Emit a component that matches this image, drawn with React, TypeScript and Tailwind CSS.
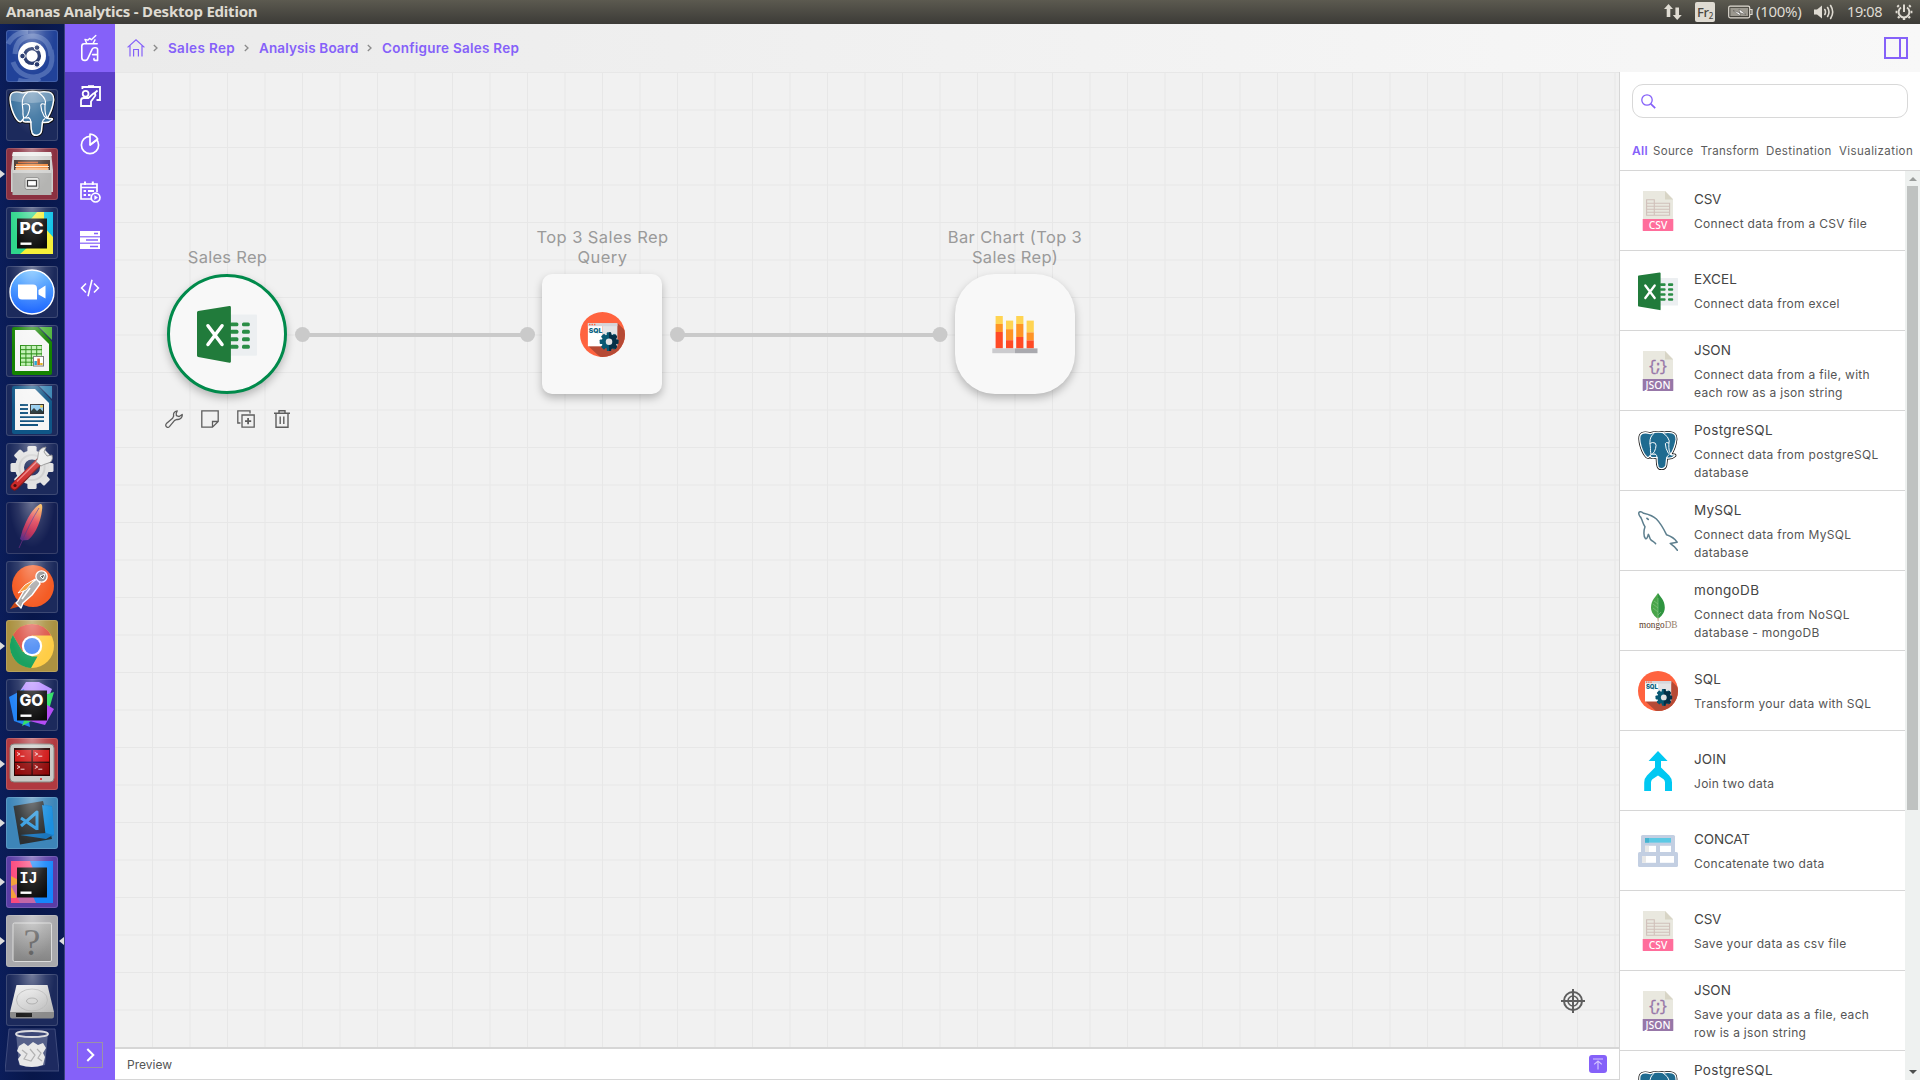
import React from "react";

type IconProps = { className?: string };

/* ---------- shared drawings ---------- */

const elephantOutline =
  "M12.6 2.6Q4.5.4 2.4 4.2Q.8 8 3.2 16Q5.6 23.6 9 26.6Q10.8 28 12.4 25.6Q13.4 28 16.4 27.2L19.6 27.4Q19.4 33 20.6 36.6Q21.6 39 24.8 38.6Q28 38.2 28.6 35L29.4 27.6Q34.4 28.6 37.8 25.4Q38.4 24.2 36.4 24.4Q34.6 24.6 33.6 24Q38 17 39 8.6Q39.2 3.2 35 2Q30.4.8 27 2Q20 .2 12.6 2.6Z";

function Elephant({ size, light = false }: { size: number; light?: boolean }) {
  return (
    <svg viewBox="0 0 41 41" width={size} height={size} fill="none" strokeLinejoin="round" strokeLinecap="round">
      <path d={elephantOutline} stroke="#0a0a0a" strokeWidth="2.8" />
      <path d={elephantOutline} stroke="#fff" strokeWidth="1.3" fill={light ? "#3a729f" : "#1f6b90"} />
      {light && <path d="M12.6 2.6Q4.5.4 2.4 4.2Q1.6 6 2 9Q20 13 38.8 9Q39.2 3.2 35 2Q30.4.8 27 2Q20 .2 12.6 2.6Z" fill="#a3bdd2" opacity=".45" />}
      <g stroke="#fff" strokeWidth="1">
        <path d="M16.6 2.2Q12 5.4 12.2 12L12.8 18Q12.6 20.4 13 22Q14 24.4 12.4 25.6" />
        <path d="M12.4 12.6Q15 11 17.6 12.4Q19.2 14 18 18Q17.2 21.6 15 23.4" />
        <path d="M26 2.2Q31.4 6 32 10Q31.4 13.6 31.6 17Q31.4 20.6 33.6 24" />
        <path d="M31.4 12.2Q28.6 11 28 13Q28.2 18 31 22.6Q32.4 24.4 34.6 24.3" />
        <path d="M19.6 27.4Q19.6 24.6 17.6 23.4M13.4 23.8H17.4M29.4 27.6Q29.6 25.4 31.4 24.6" />
      </g>
    </svg>
  );
}

function ExcelIcon({ className }: IconProps) {
  return (
    <svg viewBox="0 0 40 40" className={className}>
      <rect x="20" y="7" width="20" height="27.5" rx="0.6" fill="#eceff1" />
      <g fill="#2a8d46">
        {[12.3, 17.2, 22.2, 27.2].map((y) => (
          <g key={y}>
            <rect x="22" y={y} width="5.6" height="2.6" rx="1" />
            <rect x="30" y={y} width="5.2" height="2.6" rx="1" />
          </g>
        ))}
      </g>
      <path d="M0 6.2 Q0 5.4 .8 5.2L21.6 2Q22.6 1.9 22.6 2.8V39Q22.6 40 21.6 39.7L.8 36Q0 35.9 0 35Z" fill="#217b3b" transform="translate(0 -.6)" />
      <path d="M7.3 14.5 16.7 27M16.7 14.5 7.3 27" stroke="#fff" strokeWidth="2.3" strokeLinecap="round" />
    </svg>
  );
}

function SqlIcon({ className }: IconProps) {
  return (
    <svg viewBox="0 0 40 40" className={className}>
      <defs>
        <clipPath id="sqlc"><circle cx="20" cy="20" r="20" /></clipPath>
      </defs>
      <circle cx="20" cy="20" r="20" fill="#ff633f" />
      <g clipPath="url(#sqlc)">
        <path d="M33.5 10 L44 20.5V42H20L7 30Z" fill="#b64a35" />
      </g>
      <rect x="7" y="10" width="13" height="20.5" fill="#fff" />
      <rect x="20" y="10" width="13.2" height="20.5" fill="#e4e4e6" />
      <rect x="7" y="10" width="26.2" height="2.6" fill="#d5d6db" />
      <g fill="#ff633f"><rect x="8" y="10.5" width="1.3" height="1.3" /><rect x="10.2" y="10.5" width="1.3" height="1.3" /><rect x="12.4" y="10.5" width="1.3" height="1.3" /></g>
      <text x="7.9" y="18.3" fontFamily="Inter, sans-serif" fontWeight="900" fontSize="5.8" textLength="12" lengthAdjust="spacingAndGlyphs" fill="#0b6583">SQL</text>
      <g transform="translate(25.8 26.4)">
        <g fill="#085873">
          {[0, 45, 90, 135, 180, 225, 270, 315].map((a) => (
            <rect key={a} x="-2" y="-8.3" width="4" height="4" rx=".8" transform={`rotate(${a})`} />
          ))}
          <circle r="6.4" />
        </g>
        <path d="M0-8.3H1.6L2-6.4 4.3-5.6 6-6.6 7.2-4.4 6.3-2 8.3-1.5V1.5L6.3 2 7.2 4.4 6 6.6 4.3 5.6 2 6.4 1.6 8.3H0Z" fill="#053047" />
        <circle r="2.9" fill="#e2e2e4" />
      </g>
    </svg>
  );
}

function FileIcon({ className, label, color }: IconProps & { label: string; color: string }) {
  return (
    <svg viewBox="0 0 40 40" className={className}>
      <path d="M5 0H27L35 8V29H5Z" fill="#e9e8df" />
      <path d="M27 0V8.5H35Z" fill="#d8d5c6" />
      {label === "CSV" ? (
        <g fill="none" stroke="#d0c0ba" strokeWidth="1.1">
          <path d="M8.6 8.7H16.3V24.2H8.6ZM16.3 12.2H31.6V24.2H16.3M8.6 12.2H16.3M8.6 15.2H31.6M8.6 18.2H31.6M8.6 21.2H31.6" />
        </g>
      ) : (
        <text x="20" y="20" textAnchor="middle" fontFamily="Liberation Mono, monospace" fontSize="14.5" textLength="20" lengthAdjust="spacing" fill="#9777a8" stroke="#9777a8" strokeWidth=".3">{"{;}"}</text>
      )}
      <rect x="4.7" y="28" width="30.6" height="12" rx=".4" fill={color} />
      <text x="20" y="38" textAnchor="middle" fontFamily="Noto Sans, sans-serif" fontSize="10.6" fontWeight="500" textLength={label === "CSV" ? 18.5 : 25} lengthAdjust="spacingAndGlyphs" fill="#fff">{label}</text>
    </svg>
  );
}

function MysqlIcon({ className }: IconProps) {
  return (
    <svg viewBox="0 0 40 40" className={className} fill="none" stroke="#5d7f8e" strokeWidth="1.5" strokeLinejoin="round" strokeLinecap="round">
      <path d="M2.6 6.2C.8 4.2.2 1.6 1.4 1 2.6.4 4.4 1.3 5.4 2.2 10.5 3.4 14.6 4.3 18.4 8 22 11.6 25.5 17.5 28.6 23.8 31 24.6 36.5 27.4 39.2 31.2 37 31.6 34.6 32 32.2 32.4L36.2 35.6 39.5 39.4" />
      <path d="M2.6 6.2C4.8 10 4.9 13.4 7 15.8 5.6 19.5 5.4 25.2 7.4 27.6 9 28.6 9.6 25.4 10.4 23.4 11.4 25 11.6 26.6 12.4 28.2 13.8 30 15.6 30.6 17.6 32.6" />
      <path d="M9 7.4 10.2 8.4" strokeWidth="1.8" />
    </svg>
  );
}

function MongoIcon({ className }: IconProps) {
  return (
    <svg viewBox="0 0 40 40" className={className}>
      <path d="M20 2C18 5.5 13 9 13 16.5 13 22 17 25.6 19.6 27.5H20Z" fill="#4aa54a" />
      <path d="M20 2C22 5.5 26.8 9 26.8 16.5 26.8 22 23 25.6 20.4 27.5H20Z" fill="#2f9440" />
      <path d="M20 7V27M20 13l-4-3M20 17l-5-4M20 21l-5-4M20 24l3-3" stroke="#8cc98a" strokeWidth=".6" fill="none" />
      <path d="M19.6 27 20.2 30.5 20.6 27Z" stroke="#c6bda6" strokeWidth=".8" fill="#c6bda6" />
      <text x="1" y="37.2" fontFamily="Liberation Serif, serif" fontSize="9.4" textLength="38.5" lengthAdjust="spacingAndGlyphs" fill="#5b3b2a">mongo<tspan fill="#947e6a">DB</tspan></text>
    </svg>
  );
}

function JoinIcon({ className }: IconProps) {
  return (
    <svg viewBox="0 0 40 40" className={className}>
      <path d="M20 0 29.6 10H23V16.6L31.2 24.6Q34 27.6 34 31.5V40H27V31.5Q27 29.6 25.6 28.2L20 24.6 14.4 28.2Q13 29.6 13 31.5V40H6.2V31.5Q6.2 27.6 9 24.6L17 16.6V10H10.6Z" fill="#00c8f2" />
    </svg>
  );
}

function ConcatIcon({ className }: IconProps) {
  return (
    <svg viewBox="0 0 40 40" className={className}>
      <rect x="3" y="4" width="34" height="20" rx="1.6" fill="#c3cfe2" />
      <rect x="0" y="21" width="40" height="15" rx="1.6" fill="#c3cfe2" />
      <rect x="7" y="7" width="26" height="4.6" fill="#5cc9e4" />
      <rect x="7" y="7" width="4" height="4.6" fill="#45b3cf" />
      <rect x="7" y="14.8" width="11" height="6.2" fill="#fff" />
      <rect x="7" y="14.8" width="4" height="6.2" fill="#e8e8e8" />
      <rect x="22" y="14.8" width="11" height="6.2" fill="#fff" />
      <rect x="4" y="25" width="14" height="6.8" fill="#fff" />
      <rect x="4" y="25" width="4" height="6.8" fill="#e8e8e8" />
      <rect x="22" y="25" width="14" height="6.8" fill="#fff" />
    </svg>
  );
}

function BarsIcon({ className }: IconProps) {
  const bars = [
    { x: 3.6, y: 1, a: 8, b: 8 },
    { x: 14, y: 5.6, a: 8.6, b: 11 },
    { x: 24.2, y: 1, a: 8, b: 13 },
    { x: 34.6, y: 5.6, a: 11.8, b: 8 },
  ];
  return (
    <svg viewBox="0 0 46 39" className={className}>
      {bars.map((p) => (
        <g key={p.x}>
          <rect x={p.x} y={p.y} width="7.2" height={p.a} fill="#ffd452" />
          <rect x={p.x} y={p.y + p.a} width="7.2" height={p.b} fill="#ff9425" />
          <rect x={p.x} y={p.y + p.a + p.b} width="7.2" height={33.4 - p.y - p.a - p.b} fill="#ff4a26" />
        </g>
      ))}
      <rect x="0.3" y="33.4" width="22.7" height="4.8" fill="#cbcbce" />
      <rect x="23" y="33.4" width="22.5" height="4.8" fill="#a9a9ae" />
    </svg>
  );
}

/* ---------- top bar ---------- */

function TopBar() {
  return (
    <header className="flex h-6 shrink-0 items-center justify-between bg-gradient-to-b from-[#5c5a50] to-[#3c3b37] pr-[7px] pl-1.5 font-['Noto_Sans',sans-serif] text-[15px] leading-[23px] whitespace-nowrap text-[#dfdbd2]">
      <div className="pb-px font-bold tracking-[-0.22px]">Ananas Analytics - Desktop Edition</div>
      <div className="flex items-center">
        <svg width="18" height="18" viewBox="0 0 18 18" fill="#dfdbd2" className="mr-[13px]">
          <path d="M4.5 1 9 6H6.3V14H2.7V6H0ZM13.2 17 8.8 12H11.4V4.5H15V12H17.8Z" />
        </svg>
        <div className="mr-[13px] flex h-5 w-5 items-baseline justify-center rounded-[2px] bg-[#dfdbd2] text-[13px] leading-5 font-medium tracking-[-0.4px] text-[#4a4842]">
          Fr<span className="relative top-[2px] text-[8px]">2</span>
        </div>
        <svg width="25" height="14" viewBox="0 0 25 14" fill="none" className="mr-[3px]">
          <rect x=".7" y="1.2" width="21" height="11.6" rx="1.5" stroke="#dfdbd2" strokeWidth="1.2" />
          <rect x="2.4" y="3" width="17.6" height="8" fill="#9b988f" />
          <path d="M22 4.5h2v5h-2" stroke="#dfdbd2" strokeWidth="1.2" />
          <path d="M5 5.5 12 8 11 4 18 9.5 11.5 7.5 12.5 11Z" fill="#fff" stroke="#3c3b37" strokeWidth=".4" />
        </svg>
        <div className="w-[45px] pb-px tracking-[-0.3px]">(100%)</div>
        <svg width="21" height="18" viewBox="0 0 21 18" fill="none" stroke="#dfdbd2" strokeWidth="1.6" strokeLinecap="round" className="mr-3 ml-[13px]">
          <path d="M0 6.5H3L8 2.5V15.5L3 11.5H0Z" fill="#dfdbd2" stroke="none" />
          <path d="M10.8 6.5Q12.2 9 10.8 11.5M13.6 4.5Q16.4 9 13.6 13.5M16.6 2.5Q20.8 9 16.6 15.5" />
        </svg>
        <div className="w-[36px] pb-px text-[14.5px] tracking-[-0.4px]">19:08</div>
        <svg width="18" height="18" viewBox="0 0 18 18" className="ml-[12px]" fill="none" stroke="#dfdbd2">
          <path d="M6 4.5A5.4 5.4 0 1 0 12 4.5" strokeWidth="2" />
          <path d="M9 1.5V9" strokeWidth="2" />
          <path d="M3.8 3.8 2.4 2.4M14.2 3.8 15.6 2.4M2.4 9H.6M15.6 9H17.4M4.4 13.6 3 15M13.6 13.6 15 15M9 15V17" strokeWidth="2.4" />
        </svg>
      </div>
    </header>
  );
}

/* ---------- launcher ---------- */

const svg52 = "block h-[52px] w-[52px]";

function JetIcon({ text, a, b, c }: { text: string; a: string; b: string; c: string }) {
  return (
    <svg viewBox="0 0 52 52" className={svg52}>
      {text === "GO" ? (
        <>
          <path d="M10 18 20 3H33L46 10 36 34 12 34Z" fill={a} />
          <path d="M3 18 18 10 24 48 8 42Z" fill={b} />
          <path d="M26 20 48 13 44 27 40 34 16 47Z" fill="#35e06a" />
          <path d="M48 30 39 46 16 40 38 24Z" fill={c} />
        </>
      ) : (
        <>
          <rect x="5" y="5" width="42" height="42" fill={a} />
          <path d={text === "PC" ? "M30 5H47V47H28L36 20Z" : "M24 5H47V47H20L30 20Z"} fill={b} />
          <path d={text === "PC" ? "M25 12 31 5H38V20L47 30V47H14L22 40Z" : "M5 20 16 26 10 42H5Z"} fill={c} />
          {text === "IJ" && <path d="M5 30 14 47H30L20 25Z" fill="#c267a8" />}
        </>
      )}
      <rect x="11" y="11.5" width="30" height="30" fill="#0b0b0b" />
      <text x="13.5" y="26.5" fontFamily={text === "IJ" ? "Liberation Mono, monospace" : "Inter, sans-serif"} fontWeight="800" fontSize="16.5" textLength={text === "IJ" ? 18 : 24} lengthAdjust="spacingAndGlyphs" fill="#fff">{text}</text>
      <rect x="14.5" y="35.5" width="11" height="2.4" fill="#fff" />
    </svg>
  );
}

function OfficeDoc({ kind }: { kind: "calc" | "writer" }) {
  const calc = kind === "calc";
  const main = calc ? "#148300" : "#0f5687";
  return (
    <svg viewBox="0 0 52 52" className={svg52}>
      <path d="M8 2H32L46 17V48Q46 50 44 50H8Q6 50 6 48V4Q6 2 8 2Z" fill={main} />
      <path d="M9 5H29L43 19V46H9Z" fill="#f5f5f5" />
      <path d="M33 2H46V15Z" fill={calc ? "#4fb53c" : "#3b86b4"} />
      {calc ? (
        <>
          <rect x="14" y="20" width="22" height="21" fill="#1d8608" />
          {[21, 25.2, 29.4, 33.6, 37.6].map((y) => [15, 20.4, 25.8, 31.2].map((x) => <rect key={`${x}-${y}`} x={x} y={y} width="4.4" height="3.1" fill="#bdf0b0" />))}
          <rect x="27.5" y="31.5" width="10" height="9.5" fill="#fff" stroke="#777" />
          <path d="M30 40V36M35.4 40V38" stroke="#e0b020" strokeWidth="2.4" /><path d="M32.6 40V33.5" stroke="#e2601e" strokeWidth="2.6" /><path d="M29.6 40V36" stroke="#1da3e0" strokeWidth="2.4" />
        </>
      ) : (
        <>
          <path d="M14 21H22M14 25H22M14 29H22M14 33.2H38M14 37.2H38M14 41H32" stroke="#0d4f7c" strokeWidth="1.8" />
          <rect x="24.5" y="20.5" width="13" height="9" fill="#8cc9ee" stroke="#222" strokeWidth="1" />
          <path d="M25 29V27L28 24 31 27 34 24.4 37 27.5V29Z" fill="#1b2b2f" /><circle cx="35.5" cy="22.3" r="1.4" fill="#f3c53b" />
        </>
      )}
    </svg>
  );
}

const launcher: { tile: string; arrow?: boolean; icon: React.ReactNode }[] = [
  {
    tile: "bg-[#22439a]",
    icon: (
      <svg viewBox="0 0 52 52" className={svg52} fill="none">
        <g stroke="#8fa7da" strokeWidth="5" opacity=".4">
          <path d="M9 24Q10 6 28 6Q44 8 45 26" />
          <path d="M45 20Q50 44 28 47Q12 46 7 32" />
          <path d="M2 14Q8 2 22 2M12 50Q24 54 34 48" />
        </g>
        <circle cx="26" cy="26" r="14" fill="#fff" />
        <circle cx="26" cy="26" r="7.4" stroke="#1c2f66" strokeWidth="3.4" />
        <g fill="#1c2f66" stroke="#fff" strokeWidth="1"><circle cx="16.5" cy="26" r="2.8" /><circle cx="31" cy="17.6" r="2.8" /><circle cx="31" cy="34.4" r="2.8" /></g>
      </svg>
    ),
  },
  { tile: "bg-[#1c2a5c]", icon: <div className="flex h-[50px] items-center justify-center"><Elephant size={48} light /></div> },
  {
    tile: "bg-[#8a3040]", arrow: true,
    icon: (
      <svg viewBox="0 0 52 52" className={svg52}>
        <path d="M7 4H45L47 22V44H5V22Z" fill="#cfcfcd" /><path d="M7 4H45L46 8H6Z" fill="#ececea" />
        <rect x="8" y="12" width="36" height="12" fill="#4a3a32" />
        <path d="M10 16H42V24H10Z" fill="#f08a3c" /><path d="M9 18.5H43M9 21H43" stroke="#ffe9cf" strokeWidth="1" /><path d="M12 14.5H32" stroke="#d9642a" strokeWidth="1.5" />
        <path d="M6.5 22H45.5V47H6.5Z" fill="#b4b4b2" /><path d="M6.5 22H45.5V25H6.5Z" fill="#d2d2d0" />
        <rect x="19" y="29.5" width="14" height="12" rx="2" fill="#e6e6e4" stroke="#8e8e8c" /><rect x="21.5" y="32.5" width="9" height="5.6" fill="#fff" stroke="#333" strokeWidth="1.2" />
      </svg>
    ),
  },
  { tile: "bg-[#1c2a5c]", icon: <JetIcon text="PC" a="#2fd68c" b="#14c4e8" c="#f5f03a" /> },
  {
    tile: "bg-[#1c2a5c]",
    icon: (
      <svg viewBox="0 0 52 52" className={svg52}>
        <defs><linearGradient id="zm" x1="0" y1="0" x2="0" y2="1"><stop offset="0" stopColor="#63b8ff" /><stop offset="1" stopColor="#1f66ff" /></linearGradient></defs>
        <circle cx="26" cy="26" r="22" fill="url(#zm)" stroke="#fff" strokeWidth="1.4" />
        <path d="M12 18.5H27Q31 18.5 31 22.5V33.5H16Q12 33.5 12 29.5ZM32.5 24 39.5 19.5V32.5L32.5 28.5Z" fill="#fff" />
      </svg>
    ),
  },
  { tile: "bg-[#1c2a5c]", icon: <OfficeDoc kind="calc" /> },
  { tile: "bg-[#1c2a5c]", icon: <OfficeDoc kind="writer" /> },
  {
    tile: "bg-[#1c2a5c]",
    icon: (
      <svg viewBox="0 0 52 52" className={svg52}>
        <g transform="translate(26 24.5)" fill="#e3e3e3">
          {[0, 45, 90, 135, 180, 225, 270, 315].map((a) => <rect key={a} x="-4.6" y="-21.5" width="9.2" height="10" rx="1.5" transform={`rotate(${a})`} />)}
          <circle r="12.5" fill="none" stroke="#e0e0e0" strokeWidth="9" />
          <circle r="12.6" fill="none" stroke="#cfcfcf" strokeWidth="2" />
        </g>
        <path d="M8.5 43.5 34 18" stroke="#7e1416" strokeWidth="8" strokeLinecap="round" />
        <path d="M8.5 43 34 17.5" stroke="#cc2b2b" strokeWidth="6.4" strokeLinecap="round" />
        <path d="M11 38.5 32 17.5" stroke="#ef8080" strokeWidth="1.4" />
        <circle cx="9" cy="42.5" r="1.6" fill="#4c0c0e" />
        <path d="M32 13Q32 5 40 4L38 9 41 13 46 12Q48 19 41 20.5Q37 21.5 35 23L30 18.5Q32 16 32 13Z" fill="#ececec" stroke="#8b8b8b" strokeWidth=".9" />
      </svg>
    ),
  },
  {
    tile: "bg-[#141f52]",
    icon: (
      <svg viewBox="0 0 52 52" className={svg52}>
        <defs><linearGradient id="fe" x1=".8" y1="0" x2=".2" y2="1"><stop offset="0" stopColor="#f9b24a" /><stop offset=".4" stopColor="#e0364c" /><stop offset=".75" stopColor="#b52350" /><stop offset="1" stopColor="#5a2b86" /></linearGradient></defs>
        <path d="M34 2Q37 1 36 8Q35 18 30 28Q26 35 22 38L16 38.5 14 37Q16 28 20 20Q26 7 34 2Z" fill="url(#fe)" />
        <path d="M33 6Q24 20 13 46" stroke="#5f2a77" strokeWidth=".9" fill="none" />
      </svg>
    ),
  },
  {
    tile: "bg-[#1c2a5c]",
    icon: (
      <svg viewBox="0 0 52 52" className={svg52}>
        <circle cx="27" cy="25" r="21" fill="#f45c25" />
        <path d="M4 48 9 41 15 45Z" fill="#c94816" />
        <path d="M32 17 20 26 12 40 10 42 15 47 17 42 26 34 34 23Z" fill="#a9a9a9" stroke="#fff" strokeWidth="1.4" strokeLinejoin="round" />
        <path d="M29 18 19 24 12 32 20 29Z" fill="#f7952d" stroke="#fff" strokeWidth=".9" />
        <path d="M24 27 16 38" stroke="#fff" strokeWidth="1.6" />
        <circle cx="35.5" cy="15.5" r="5.6" fill="#8e8e8e" stroke="#fff" strokeWidth="1.4" /><path d="M34 15 39 13 37 18Z" fill="#444" stroke="#fff" strokeWidth="1" />
      </svg>
    ),
  },
  {
    tile: "bg-[#ab9141]", arrow: true,
    icon: (
      <svg viewBox="0 0 52 52" className={svg52}>
        <circle cx="26" cy="26" r="22" fill="#ffcd46" />
        <path d="M26 4A22 22 0 0 1 45.1 15.5H26L16.5 31.5 6.9 15A22 22 0 0 1 26 4Z" fill="#dd5347" />
        <path d="M6.9 15 16.5 31.5 26 36.5H31.5L25 48A22 22 0 0 1 6.9 15Z" fill="#1aa160" />
        <circle cx="26" cy="26" r="10.2" fill="#fff" /><circle cx="26" cy="26" r="8" fill="#4a8af4" />
      </svg>
    ),
  },
  { tile: "bg-[#1c2a5c]", icon: <JetIcon text="GO" a="#b78cff" b="#2484f5" c="#b44df5" /> },
  {
    tile: "bg-[#b03a40]", arrow: true,
    icon: (
      <svg viewBox="0 0 52 52" className={svg52}>
        <rect x="4" y="6" width="44" height="38" rx="4" fill="#c9c9c5" stroke="#85857f" strokeWidth="1" />
        <rect x="8" y="10" width="36" height="28" fill="#2a0202" />
        {[[9, 12], [26.8, 12], [9, 25], [26.8, 25]].map(([x, y]) => (
          <g key={`${x}-${y}`}>
            <rect x={x} y={y} width="16.4" height="11.6" fill={y === 12 ? "#d01212" : "#8f0808"} />
            <path d={`M${x + 2} ${y + 2.5}l3 1.5-3 1.5M${x + 5.5} ${y + 6.2}h4`} stroke="#f5cccc" strokeWidth="1" fill="none" />
          </g>
        ))}
        <circle cx="35" cy="41" r="1" fill="#e01b1b" />
      </svg>
    ),
  },
  {
    tile: "bg-[#3d85b8]", arrow: true,
    icon: (
      <svg viewBox="0 0 52 52" className={svg52}>
        <path d="M35 7 46 9 48 38 38 44 14 38Z" fill="#1687d8" />
        <path d="M7.5 9 37 4 46 42 14 47.5Z" fill="#2b2f31" />
        <path d="M36 8 46 10 48 37 40 41Z" fill="#1c8fdf" /><path d="M14 38 40 36 47 38 40 42Z" fill="#1b76bc" />
        <path d="M15 21 31 32M15 29 31 15V33" stroke="#2f9ae0" strokeWidth="3" fill="none" strokeLinejoin="round" />
      </svg>
    ),
  },
  { tile: "bg-[#5a3da6]", arrow: true, icon: <JetIcon text="IJ" a="#fb4a7e" b="#1686fb" c="#f5a03a" /> },
  {
    tile: "bg-[#a9a9ac]", arrow: true,
    icon: (
      <svg viewBox="0 0 52 52" className={svg52}>
        <defs><linearGradient id="qm" x1="0" y1="0" x2="0" y2="1"><stop offset="0" stopColor="#b0b0b0" /><stop offset="1" stopColor="#858585" /></linearGradient></defs>
        <rect x="7" y="8" width="38.5" height="38.5" rx="1.5" fill="url(#qm)" stroke="#dcdcdc" />
        <text x="26" y="39.5" textAnchor="middle" fontFamily="Liberation Serif, serif" fontSize="38" fill="#5f5f5f">?</text>
      </svg>
    ),
  },
  {
    tile: "bg-[#1c2a5c]",
    icon: (
      <svg viewBox="0 0 52 52" className={svg52}>
        <defs><linearGradient id="dk" x1="0" y1="0" x2="1" y2="1"><stop offset="0" stopColor="#f4f4f4" /><stop offset="1" stopColor="#b9b9b9" /></linearGradient></defs>
        <path d="M10.5 11H41.5L48 38H4Z" fill="url(#dk)" /><path d="M4 38H48V42Q48 44.5 46 44.5H6Q4 44.5 4 42Z" fill="#8b8b8b" /><rect x="10" y="39" width="16" height="4" fill="#1f1f1f" />
        <ellipse cx="26" cy="26" rx="15.5" ry="11" fill="none" stroke="#bcbcbc" /><ellipse cx="26" cy="27" rx="5.5" ry="3" fill="#d4d4d4" stroke="#a9a9a9" />
      </svg>
    ),
  },
];

function Launcher() {
  return (
    <aside className="flex w-[65px] shrink-0 flex-col gap-[7px] border-r border-[#39427a] bg-gradient-to-r from-[#0b1d5a] via-[#08174a] to-[#0a1a52] pt-1.5 pl-1.5">
      {launcher.map((l, i) => (
        <div key={i} className="relative h-[52px] w-[52px] shrink-0">
          <div className={`h-[52px] w-[52px] overflow-hidden rounded-[3px] ring-1 ring-white/15 ring-inset ${l.tile}`}>{l.icon}</div>
          <div className="pointer-events-none absolute inset-0 rounded-[3px] bg-[radial-gradient(ellipse_at_50%_0%,rgba(255,255,255,0.38)_0%,rgba(255,255,255,0.1)_38%,transparent_62%)]" />
          {l.arrow && <div className="absolute top-[22px] -left-1.5 h-0 w-0 border-y-4 border-l-5 border-y-transparent border-l-[#dcdcdc]" />}
          {i === 15 && <div className="absolute top-[22px] left-[53px] h-0 w-0 border-y-4 border-r-5 border-y-transparent border-r-[#dcdcdc]" />}
        </div>
      ))}
      <svg viewBox="0 0 54 44" className="-mt-[5px] -ml-px h-[44px] w-[54px] shrink-0">
        <path d="M4 1H50L54 43H0Z" fill="#1d2a60" stroke="#4a5585" strokeWidth=".8" />
        <path d="M11 5H43L40 37Q27 41 14 37Z" fill="#8f97b4" opacity=".5" />
        <ellipse cx="27" cy="6" rx="16" ry="3" fill="#3c4777" stroke="#dcdce0" strokeWidth="1.8" />
        <path d="M14 18 19 15 23 18 28 14 33 17 38 15 41 20 38 25 40 29 38 37Q27 41 15 37L13 31 16 27 12 23Z" fill="#e8e8e8" />
        <path d="M17 22 22 26 19 31 26 33 30 27 25 21M32 21 36 25 33 30 37 33" stroke="#b2b2b2" strokeWidth="1.2" fill="none" />
      </svg>
    </aside>
  );
}

/* ---------- purple navigation ---------- */

const navIcons: React.ReactNode[] = [
  <svg key="logo" width="20" height="28" viewBox="0 0 20 28" fill="none" stroke="#fff" strokeWidth="1.5" strokeLinecap="round" strokeLinejoin="round">
    <path d="M17.2 9.8H4.2Q1.8 9.8 1.8 12.2V23.4Q1.8 26.4 4.6 26.4H5.4Q7 26.4 7.8 24.6L12.2 15.2Q13 13.8 14.4 13.8H15.6Q17.6 13.8 17.6 15.8V26.4H15Q13.6 26.4 14 24.6M12.6 20.6H17.4" strokeWidth="1.6" />
    <path d="M6.6 9 5 5.4 7.8 6.2 9.6 4.4 11.4 5.8 15.8 1.6M13.4 8.8 15 5.8" strokeWidth="1.4" />
  </svg>,
  <svg key="board" width="21" height="22" viewBox="0 0 21 22" fill="none" stroke="#fff" strokeWidth="1.8">
    <path d="M2.4 4V2H20V15H16.5" /><path d="M8 1.6H14" strokeWidth="2.8" />
    <circle cx="5.6" cy="8.8" r="2.9" />
    <path d="M1 21V15.5Q1 13 3.6 13H8.4L13.4 8.6Q15.6 8 15.4 10.4L11 16.6V21Z" /><path d="M13.5 9 17.5 5.5" />
  </svg>,
  <svg key="pie" width="20" height="22" viewBox="0 0 20 22" fill="none" stroke="#fff" strokeWidth="1.7" strokeLinejoin="round">
    <circle cx="10" cy="12" r="8.6" /><path d="M10 12V1.2Q15 1.4 17.6 6Z" fill="#8561f9" />
    <path d="M10 12 17.8 6.4" />
  </svg>,
  <svg key="sched" width="21" height="22" viewBox="0 0 21 22" fill="none" stroke="#fff" strokeWidth="1.7">
    <path d="M11 18H1V3H17V11M1 6.5H17" /><path d="M5 .5V4M12.8 .5V4" strokeWidth="2" />
    <path d="M3.6 10H6M3.6 14H6M8 10H14M8 14H10.5" strokeWidth="2.2" />
    <circle cx="15.6" cy="16.6" r="4.4" /><path d="M14.4 14.2V19L18 16.6Z" fill="#fff" stroke="none" />
  </svg>,
  <svg key="rows" width="20" height="18" viewBox="0 0 20 18">
    <rect width="20" height="5.2" fill="#fff" /><rect y="6.4" width="20" height="5.2" fill="#fff" /><rect y="12.8" width="20" height="5.2" fill="#fff" />
    <path d="M14 2.6H18M6 9H18M10 15.4H18" stroke="#8561f9" strokeWidth="1.5" />
  </svg>,
  <svg key="code" width="20" height="18" viewBox="0 0 20 18" fill="none" stroke="#fff" strokeWidth="1.6">
    <path d="M6 4.5 1.6 9 6 13.5M14 4.5 18.4 9 14 13.5M12 .8 8 17.2" />
  </svg>,
];

function PurpleNav() {
  return (
    <nav className="flex w-[50px] shrink-0 flex-col bg-[#8561f9]">
      {navIcons.map((ic, i) => (
        <div key={i} className={`flex h-12 items-center justify-center ${i === 1 ? "bg-[#5b3fc8]" : ""}`}>{ic}</div>
      ))}
      <div className="mt-auto mb-3 ml-3 flex h-[26px] w-[26px] items-center justify-center border border-[#9a91a8]">
        <svg width="9" height="14" viewBox="0 0 9 14" fill="none" stroke="#fff" strokeWidth="2"><path d="M1.3 1 7.3 7 1.3 13" /></svg>
      </div>
    </nav>
  );
}

/* ---------- header ---------- */

function Crumb({ children, className = "" }: { children: string; className?: string }) {
  return (
    <>
      <svg width="5" height="8" viewBox="0 0 5 8" fill="none" stroke="#8b8b8b" strokeWidth="1.3" className="shrink-0"><path d="M.8 1 4 4 .8 7" /></svg>
      <span className={`ml-[10px] font-semibold whitespace-nowrap text-[#8561f9] ${className}`}>{children}</span>
    </>
  );
}

function Header() {
  return (
    <div className="flex h-12 shrink-0 items-center bg-gradient-to-r from-[#ebebeb] to-[#f8f8f8] pr-3 pl-3 text-[13.5px]">
      <svg width="18" height="18" viewBox="0 0 18 18" fill="none" stroke="#8561f9" strokeWidth="1.2" className="mr-2">
        <path d="M.6 8.4 9 .8 17.4 8.4M3 6.5V17.4M15 6.5V17.4M6.6 17.4V10.5H11.4V17.4" />
      </svg>
      <Crumb className="mr-[9px] w-[67px] tracking-[0.34px]">Sales Rep</Crumb>
      <Crumb className="mr-[9px] w-[99px] tracking-[0.13px]">Analysis Board</Crumb>
      <Crumb className="tracking-[0.25px]">Configure Sales Rep</Crumb>
      <div className="mr-0 ml-auto flex h-[22px] w-6 border-2 border-[#8561f9]">
        <div className="w-[15px] border-r-2 border-[#8561f9]" />
      </div>
    </div>
  );
}

/* ---------- canvas ---------- */

function Board() {
  return (
    <div className="relative grow overflow-hidden bg-[#f1f1f1]">
      <svg className="absolute inset-0 h-full w-full">
        <defs>
          <pattern id="grid" x="-0.5" width="37.5" height="37.5" patternUnits="userSpaceOnUse">
            <path d="M37.5 0H0V37.5" fill="none" stroke="#e7e7e7" strokeWidth="2" />
          </pattern>
        </defs>
        <rect width="100%" height="100%" fill="url(#grid)" />
        <g stroke="#cacaca" fill="#cacaca" strokeWidth="4">
          <path d="M187.5 263H412.5M562.5 263H825" />
          <g stroke="none"><circle cx="187.5" cy="262.5" r="7.5" /><circle cx="412.5" cy="262.5" r="7.5" /><circle cx="562.5" cy="262.5" r="7.5" /><circle cx="825" cy="262.5" r="7.5" /></g>
        </g>
      </svg>

      <div className="absolute top-[155px] left-[32.5px] flex h-10 w-[160px] items-end justify-center text-center text-[16.5px] leading-5 tracking-[0.28px] text-[#9a9a9a]">Sales Rep</div>
      <div className="absolute top-[155px] left-[407.5px] w-[160px] text-center text-[16.5px] leading-5 tracking-[0.42px] text-[#9a9a9a]">Top 3 Sales Rep<br />Query</div>
      <div className="absolute top-[155px] left-[820px] w-[160px] text-center text-[16.5px] leading-5 tracking-[0.35px] text-[#9a9a9a]">Bar Chart (Top 3<br />Sales Rep)</div>

      <div className="absolute top-[202px] left-[52px] flex h-[120px] w-[120px] items-center justify-center rounded-full border-3 border-[#008a4b] bg-[#f8f8f8] shadow-[0_4px_8px_rgba(0,0,0,0.25)]">
        <ExcelIcon className="h-[60px] w-[60px]" />
      </div>
      <div className="absolute top-[202px] left-[427px] flex h-[120px] w-[120px] items-center justify-center rounded-[10px] bg-[#f8f8f8] shadow-[0_4px_8px_rgba(0,0,0,0.25)]">
        <SqlIcon className="h-[45px] w-[45px]" />
      </div>
      <div className="absolute top-[202px] left-[840px] flex h-[120px] w-[120px] items-center justify-center rounded-[40px] bg-[#f8f8f8] shadow-[0_4px_8px_rgba(0,0,0,0.25)]">
        <BarsIcon className="h-[39px] w-[46px]" />
      </div>

      <div className="absolute top-[338px] left-[50px] flex gap-[18px]">
        <svg width="18" height="18" viewBox="0 0 18 18" fill="none" stroke="#5e5e5e" strokeWidth="1.3" strokeLinejoin="round">
          <path d="M12.2.9C9.4 1.2 8 3.6 8.7 6L7.6 8.2 1.4 13.6C.2 15 .8 16.6 2 17.2 3 17.6 3.8 17.2 4.4 16.6L9.6 10.4 12 9.4C15 10 17.6 7.6 17.2 4.4L14.2 6.6 11.4 5.6 11.2 3.2Z" />
        </svg>
        <svg width="18" height="18" viewBox="0 0 18 18" fill="none" stroke="#5e5e5e" strokeWidth="1.3">
          <path d="M.8.8H17.2V11.5L11.5 17.2H.8ZM17.2 11.5H11.5V17.2" />
        </svg>
        <svg width="18" height="18" viewBox="0 0 18 18" fill="none" stroke="#5e5e5e" strokeWidth="1.3">
          <path d="M3.5 13H.8V.8H13V3.5M5 5H17.2V17.2H5Z" /><path d="M11.1 8V14.2M8 11.1H14.2" strokeWidth="1.8" />
        </svg>
        <svg width="18" height="18" viewBox="0 0 18 18" fill="none" stroke="#5e5e5e" strokeWidth="1.4">
          <path d="M1 3.2H17M3 3.2V17.2H15V3.2M6 3V.8H12V3M7.2 6.5V14M10.8 6.5V14" />
        </svg>
      </div>

      <svg width="24" height="24" viewBox="0 0 24 24" fill="none" stroke="#5e5e5e" strokeWidth="2" className="absolute right-[34px] bottom-[34px]">
        <circle cx="12" cy="12" r="9" /><circle cx="12" cy="12" r="5" strokeWidth="1.6" /><path d="M12 0V24M0 12H24" />
      </svg>
    </div>
  );
}

function PreviewBar() {
  return (
    <div className="flex h-[33px] shrink-0 items-center justify-between border-t-2 border-b border-[#d6d6d6] bg-white pr-3 pl-3 text-[12px]">
      <span className="mt-px text-[#555]">Preview</span>
      <div className="flex h-[18px] w-[18px] items-center justify-center rounded-[3px] bg-[#8561f9]">
        <svg width="12" height="12" viewBox="0 0 12 12" fill="none" stroke="#d3c5ff" strokeWidth="1.2"><path d="M1 1H11M6 11.5V3M2.2 6.4 6 3 9.8 6.4" /></svg>
      </div>
    </div>
  );
}

/* ---------- right panel ---------- */

const ic40 = "h-10 w-10 shrink-0";
const csv = <FileIcon className={ic40} label="CSV" color="#ff6d9b" />;
const json = <FileIcon className={ic40} label="JSON" color="#9777a8" />;
const pg = <div className="shrink-0"><Elephant size={40} /></div>;

const steps: { title: string; track: string; lines: string[]; icon: React.ReactNode }[] = [
  { title: "CSV", track: "tracking-[-0.2px]", lines: ["Connect data from a CSV file"], icon: csv },
  { title: "EXCEL", track: "tracking-[0.1px]", lines: ["Connect data from excel"], icon: <ExcelIcon className={ic40} /> },
  { title: "JSON", track: "tracking-[0px]", lines: ["Connect data from a file, with", "each row as a json string"], icon: json },
  { title: "PostgreSQL", track: "tracking-[0.32px]", lines: ["Connect data from postgreSQL", "database"], icon: pg },
  { title: "MySQL", track: "tracking-[0.2px]", lines: ["Connect data from MySQL", "database"], icon: <MysqlIcon className={ic40} /> },
  { title: "mongoDB", track: "tracking-[0.36px]", lines: ["Connect data from NoSQL", "database - mongoDB"], icon: <MongoIcon className={ic40} /> },
  { title: "SQL", track: "tracking-[0.1px]", lines: ["Transform your data with SQL"], icon: <SqlIcon className={ic40} /> },
  { title: "JOIN", track: "tracking-[0.1px]", lines: ["Join two data"], icon: <JoinIcon className={ic40} /> },
  { title: "CONCAT", track: "tracking-[-0.15px]", lines: ["Concatenate two data"], icon: <ConcatIcon className={ic40} /> },
  { title: "CSV", track: "tracking-[-0.2px]", lines: ["Save your data as csv file"], icon: csv },
  { title: "JSON", track: "tracking-[0px]", lines: ["Save your data as a file, each", "row is a json string"], icon: json },
  { title: "PostgreSQL", track: "tracking-[0.32px]", lines: ["Save your data into postgreSQL", "database"], icon: pg },
];

function SidePanel() {
  return (
    <aside className="flex w-[301px] shrink-0 flex-col overflow-hidden border-l border-[#d6d6d6] bg-white">
      <div className="mt-3 ml-3 flex h-[34px] w-[276px] shrink-0 items-center rounded-[11px] border border-[#d8d8d8] pl-2">
        <svg width="15" height="15" viewBox="0 0 15 15" fill="none" stroke="#8561f9" strokeWidth="1.3"><circle cx="6" cy="6" r="5.2" /><path d="M9.8 9.8 14.2 14.2" strokeWidth="1.7" /></svg>
      </div>
      <div className="mt-[24px] ml-3 flex h-[18px] shrink-0 text-[11.5px] leading-[18px] tracking-[0.35px] whitespace-nowrap text-[#5c5c5c]">
        <span className="w-[21px] text-[12px] font-semibold text-[#8561f9]">All</span>
        <span className="w-[47.5px]">Source</span>
        <span className="w-[65.5px] tracking-[0.3px]">Transform</span>
        <span className="w-[73px] tracking-[0.42px]">Destination</span>
        <span className="tracking-[0.42px]">Visualization</span>
      </div>
      <div className="mt-[10px] flex min-h-0 grow basis-0 border-t border-[#d6d6d6]">
        <div className="flex w-[285px] flex-col overflow-hidden">
          {steps.map((s, i) => (
            <div key={i} className="flex h-20 shrink-0 items-center border-b border-[#d6d6d6] pl-[18px]">
              {s.icon}
              <div className="ml-4 whitespace-nowrap">
                <div className={`mb-[5px] text-[13.5px] leading-[21px] text-[#444] ${s.track}`}>{s.title}</div>
                {s.lines.map((l) => <div key={l} className="text-[12px] leading-[18px] tracking-[0.29px] text-[#555]">{l}</div>)}
              </div>
            </div>
          ))}
        </div>
        <div className="flex w-[15px] flex-col items-center bg-[#eef1f0]">
          <div className="mt-[6px] h-0 w-0 border-x-4 border-b-4 border-x-transparent border-b-[#9a9d9c]" />
          <div className="mt-[5px] h-[624px] w-[11px] bg-[#bfc2c1]" />
          <div className="mt-auto mb-1.5 h-0 w-0 border-x-4 border-t-4 border-x-transparent border-t-[#4c4f4e]" />
        </div>
      </div>
    </aside>
  );
}

export default function App() {
  return (
    <div className="flex h-[1080px] w-[1920px] flex-col overflow-hidden font-['Inter',sans-serif]">
      <TopBar />
      <div className="flex min-h-0 grow">
        <Launcher />
        <PurpleNav />
        <div className="flex min-w-0 grow flex-col">
          <Header />
          <div className="flex min-h-0 grow">
            <div className="flex min-w-0 grow flex-col">
              <Board />
              <PreviewBar />
            </div>
            <SidePanel />
          </div>
        </div>
      </div>
    </div>
  );
}
